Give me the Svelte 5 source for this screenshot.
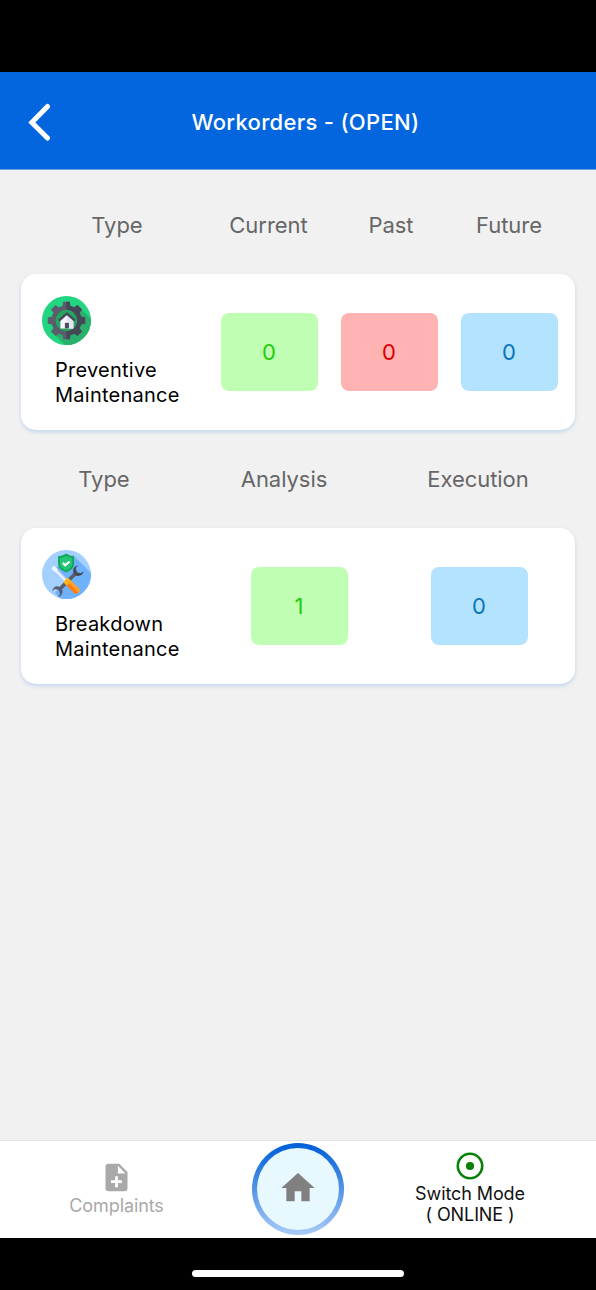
<script lang="ts">
    interface Count {
        label: string;
        value: number;
        color: string;
    }
    interface Section {
        id: string;
        title: string[];
        counts: Count[];
    }
    let {
        status = 'OPEN',
        mode = 'ONLINE',
    }:{
        status?: string;
        mode?: string;
    } = $props();

    const sections: Section[] = [
        {
            id: 'preventive',
            title: ['Preventive', 'Maintenance'],
            counts: [
                { label: 'Current', value: 0, color: 'green' },
                { label: 'Past', value: 0, color: 'red' },
                { label: 'Future', value: 0, color: 'blue' },
            ],
        },
        {
            id: 'breakdown',
            title: ['Breakdown', 'Maintenance'],
            counts: [
                { label: 'Analysis', value: 1, color: 'green' },
                { label: 'Execution', value: 0, color: 'blue' },
            ],
        },
    ];
    const teeth = [0, 45, 90, 135, 180, 225, 270, 315];
</script>

<div class="screen">
    <div class="status-bar"></div>
    <header>
        <button class="back" aria-label="Back">
            <svg width="24" height="40" viewBox="0 0 24 40">
                <path d="M20.5 3.5 L4.8 19.5 L20.5 35" fill="none" stroke="#fff" stroke-width="5" stroke-linecap="round" />
            </svg>
        </button>
        <h1>Workorders - ({status})</h1>
    </header>

    <main>
        {#each sections as section}
        <div class="labels {section.id}">
            <span>Type</span>
            {#each section.counts as count}
            <span>{count.label}</span>
            {/each}
        </div>
        <div class="card">
            <div class="card-type">
                {#if section.id === 'preventive'}
                <svg class="type-icon" viewBox="0 0 49 49">
                    <defs>
                        <clipPath id="gear-disc"><circle cx="24.5" cy="24.5" r="24.5" /></clipPath>
                        <clipPath id="gear-right"><path d="M24.5 0H49V49H24.5Z" /></clipPath>
                    </defs>
                    <circle cx="24.5" cy="24.5" r="24.5" fill="#22d581" />
                    <path clip-path="url(#gear-disc)" d="M37 11 L55 29 V55 H29 L12 38Z" fill="#29b06c" />
                    {#snippet gear()}
                        <circle cx="24.5" cy="24.5" r="12.9" fill="none" stroke="currentColor" stroke-width="4.4" />
                        {#each teeth as angle}
                        <path d="M21.2 5.8H27.8L28.6 12H20.4Z" fill="currentColor" transform="rotate({angle} 24.5 24.5)" />
                        {/each}
                    {/snippet}
                    <circle cx="24.5" cy="24.5" r="11" fill="#25a65f" />
                    <g class="gear">{@render gear()}</g>
                    <g class="gear dark" clip-path="url(#gear-right)">{@render gear()}</g>
                    <path d="M18.4 24L24.5 18.5L31.4 24V32.4H18.4Z" fill="#f7f5ff" />
                    <path d="M24.9 18.5L31.4 24V32.4H24.9Z" fill="#e6e3f2" />
                    <path d="M16.9 24.6L24.9 17.6L32.9 24.6" fill="none" stroke="#464957" stroke-width="2.4" />
                    <path d="M22.9 26.8H26.9V32.4H22.9Z" fill="#4b4c5b" />
                </svg>
                {:else}
                <svg class="type-icon" viewBox="0 0 49 49">
                    <defs>
                        <clipPath id="tools-disc"><circle cx="24.5" cy="24.5" r="24.5" /></clipPath>
                    </defs>
                    <circle cx="24.5" cy="24.5" r="24.5" fill="#a4d0ff" />
                    <path clip-path="url(#tools-disc)" d="M31 5L55 29V55H25L13 43L23 31L10 19L18 16Z" fill="#6eb1fc" />
                    <g transform="rotate(45 25.8 31.2)">
                        <path d="M24 20H27.6V42H24Z" fill="#5a5d6b" />
                        <path d="M22 12.8A5.2 5.2 0 1 0 29.6 12.8V16.2L25.8 18.4L22 16.2Z" fill="#464957" />
                        <path d="M22 49.4A5.2 5.2 0 1 1 29.6 49.4V46L25.8 43.8L22 46Z" fill="#5a5d6b" />
                    </g>
                    <g transform="rotate(-45 24.5 31)">
                        <path d="M22.6 13.5L23.3 11.5H26L26.6 13.5L25.8 19V31H23.3V19Z" fill="#f2f4ff" stroke="#f2f4ff" stroke-width=".8" />
                        <path d="M24.8 17H26V31H24.8Z" fill="#cfd9ef" />
                        <path d="M21.5 30H27.8V33.5L28 45.5Q28 47.5 24.7 47.5Q21.4 47.5 21.3 45.5V33.5Z" fill="#ff7c0a" />
                        <path d="M24.6 34H28L28.1 45.5Q28 47.5 24.7 47.5Z" fill="#ffa032" />
                        <path d="M21.5 29.5H27.8V34.2H21.5Z" fill="#ffb51c" />
                    </g>
                    <path d="M24.2 3.5Q27.8 6 32 6.2V14Q32 19.5 24.2 22.5Q16 19.5 16 14V6.2Q20.5 6 24.2 3.5Z" fill="#12a95d" />
                    <path d="M24.1 5.8Q27 7.7 30.1 8V14Q30 18 24.1 20.4Q18 18 18 14V8Q21.5 7.7 24.1 5.8Z" fill="#22c676" />
                    <path d="M20.8 12.9L23.2 15.2L27.6 11.5" fill="none" stroke="#fff" stroke-width="2.2" />
                </svg>
                {/if}
                <p>{section.title[0]}<br />{section.title[1]}</p>
            </div>
            <div class="counts">
                {#each section.counts as count}
                <div class="count-cell">
                    <button class="count {count.color}">{count.value}</button>
                </div>
                {/each}
            </div>
        </div>
        {/each}
    </main>

    <footer>
        <button class="tab complaints">
            <svg width="33" height="33" viewBox="0 0 24 24" fill="currentColor">
                <path d="M14 2H6c-1.1 0-1.99.9-1.99 2L4 20c0 1.1.89 2 1.99 2H18c1.1 0 2-.9 2-2V8l-6-6zm2 14h-3v3h-2v-3H8v-2h3v-3h2v3h3v2zm-3-7V3.5L18.5 9H13z" />
            </svg>
            <span>Complaints</span>
        </button>
        <button class="home" aria-label="Home">
            <span class="home-inner">
                <svg width="40" height="40" viewBox="0 0 24 24" fill="#808080">
                    <path d="M10 20v-6h4v6h5v-8h3L12 3 2 12h3v8z" />
                </svg>
            </span>
        </button>
        <button class="tab mode">
            <svg width="28" height="28" viewBox="0 0 28 28">
                <circle cx="14" cy="14" r="12.2" fill="none" stroke="#088008" stroke-width="2.6" />
                <circle cx="14" cy="14" r="4.1" fill="#088008" />
            </svg>
            <span>Switch Mode</span>
            <span class="mode-name">( {mode} )</span>
        </button>
    </footer>
    <div class="home-indicator"><span></span></div>
</div>

<style>
    :global(body){
        margin: 0;
        background: #000;
    }
    .screen{
        display: flex;
        flex-direction: column;
        width: 100%;
        height: 1290px;
        overflow: hidden;
        background: #f1f1f1;
        font-family: Inter, "Liberation Sans", sans-serif;
    }
    button{
        margin: 0;
        padding: 0;
        border: none;
        background: transparent;
        font: inherit;
        color: inherit;
        cursor: pointer;
    }
    .status-bar{
        flex: none;
        height: 72px;
        background: #000;
    }
    header{
        flex: none;
        display: grid;
        grid-template-columns: 80px 1fr 65px;
        align-items: center;
        height: 97px;
        background: #0366df;
        border-bottom: 1px solid #6fa3e6;
        box-sizing: content-box;
    }
    .back{
        display: flex;
        padding-left: 27px;
        padding-top: 4px;
    }
    h1{
        margin: 0;
        padding-top: 2px;
        text-align: center;
        color: #fff;
        font-size: 22px;
        font-weight: 550;
        letter-spacing: 0.3px;
        white-space: nowrap;
    }
    main{
        flex: 1;
    }
    .labels{
        display: grid;
        height: 30px;
        line-height: 30px;
        text-align: center;
        font-size: 22px;
        letter-spacing: -0.05px;
        color: #666;
    }
    .labels.preventive{
        grid-template-columns: 168px 135px 110px 126px;
        margin: 40px 0 34px;
        padding-left: 33px;
    }
    .labels.breakdown{
        grid-template-columns: 184px 176px 212px;
        margin: 34px 0 34px;
        padding-left: 12px;
    }
    .card{
        display: flex;
        width: 554px;
        height: 156px;
        margin: 0 auto;
        background: #fff;
        border-radius: 15px;
        box-shadow: 0 2px 4px #c3d4ec;
    }
    .card-type{
        width: 188px;
        padding: 22px 0 0 21px;
        box-sizing: border-box;
    }
    .type-icon{
        display: block;
        width: 49px;
        height: 49px;
    }
    .gear{
        color: #5a5d6b;
    }
    .gear.dark{
        color: #454856;
    }
    .card-type p{
        margin: 13px 0 0 13px;
        font-size: 20px;
        line-height: 25px;
        letter-spacing: 0.25px;
        color: #000;
    }
    .counts{
        display: flex;
        width: 360px;
    }
    .count-cell{
        flex: 1;
        display: flex;
        align-items: center;
        justify-content: center;
    }
    .count{
        width: 97px;
        height: 78px;
        border-radius: 8px;
        font-size: 22px;
    }
    .green{
        color: #22cb0b;
        background: #c0ffb3;
    }
    .red{
        color: #d80000;
        background: #ffb3b3;
    }
    .blue{
        color: #0876b8;
        background: #b3e3ff;
    }
    footer{
        flex: none;
        display: grid;
        grid-template-columns: 233px 130px 1fr;
        align-items: center;
        justify-items: center;
        height: 97px;
        padding-bottom: 2px;
        box-sizing: border-box;
        background: #fff;
        box-shadow: 0 -1px 0 #e4e4e4;
    }
    .tab{
        display: flex;
        flex-direction: column;
        align-items: center;
        font-size: 18px;
        line-height: 21px;
        letter-spacing: -0.1px;
    }
    .complaints{
        color: #a9a9a9;
    }
    .complaints svg{
        margin-bottom: 1px;
    }
    .mode{
        margin-right: 19px;
        color: #111;
    }
    .mode svg{
        margin-bottom: 3px;
    }
    .home{
        width: 92px;
        height: 92px;
        padding: 5px;
        box-sizing: border-box;
        border-radius: 50%;
        background: linear-gradient(#0562d8 5%, #a6c9f7 98%);
    }
    .home-inner{
        display: flex;
        align-items: center;
        justify-content: center;
        height: 100%;
        border-radius: 50%;
        background: #e8f8ff;
    }
    .home-inner svg{
        margin: 0 1px 1px 0;
    }
    .home-indicator{
        flex: none;
        height: 52px;
        display: flex;
        justify-content: center;
        background: #000;
    }
    .home-indicator span{
        width: 212px;
        height: 7px;
        margin-top: 32px;
        border-radius: 4px;
        background: #fff;
    }
</style>
